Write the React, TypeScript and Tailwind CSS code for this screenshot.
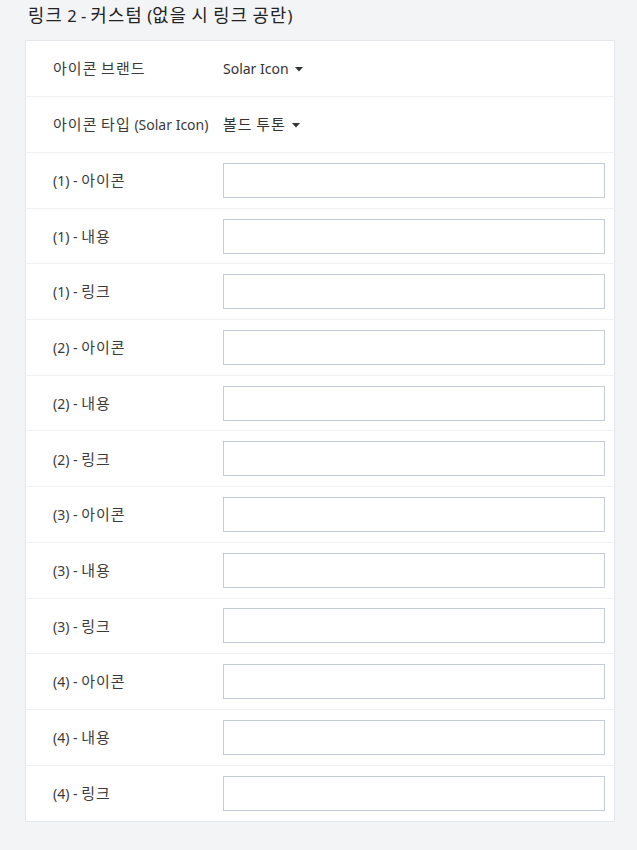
const FONT = { fontFamily: '"Noto Sans", "Noto Sans CJK KR", sans-serif' }

const ROWS = [1, 2, 3, 4].flatMap((n) => [
  `(${n}) - 아이콘`,
  `(${n}) - 내용`,
  `(${n}) - 링크`,
])

// Hangul in the reference sets wider than Noto's, so give those runs a bit more room
function Txt({ children }: { children: string }) {
  const parts = children.split(/([\uAC00-\uD7A3]+)/)
  return (
    <span>
      {parts.map((p, i) =>
        /[\uAC00-\uD7A3]/.test(p) ? (
          <span key={i} className="text-[1.07em] tracking-[0.07em]" style={{ fontFamily: '"Noto Sans CJK KR", sans-serif' }}>
            {p}
          </span>
        ) : (
          <span key={i}>{p}</span>
        ),
      )}
    </span>
  )
}

function Caret() {
  return (
    <svg width="8" height="5" viewBox="0 0 8 5" className="ml-[6px] mt-[1px]">
      <path d="M0 0h8L4 4.5z" fill="#333" />
    </svg>
  )
}

function SelectRow({ label, value }: { label: string; value: string }) {
  return (
    <div className="flex items-center h-[56px] border-b border-[#f0f1f3]">
      <div className="w-[197px] pl-[27px] shrink-0">
        <Txt>{label}</Txt>
      </div>
      <button className="flex items-center text-[#333]">
        <Txt>{value}</Txt>
        <Caret />
      </button>
    </div>
  )
}

export default function App() {
  return (
    <div className="min-h-[850px] bg-[#f3f4f6] text-[14px] text-[#3a3a3a]" style={FONT}>
      <div className="px-[28px] h-[40px] text-[16.5px] leading-[30px] text-[#222]">
        <Txt>링크 2 - 커스텀 (없을 시 링크 공란)</Txt>
      </div>
      <div className="ml-[25px] mr-[22px] bg-white border border-[#e3e6ea]">
        <SelectRow label="아이콘 브랜드" value="Solar Icon" />
        <SelectRow label="아이콘 타입 (Solar Icon)" value="볼드 투톤" />
        {ROWS.map((label, i) => (
          <div
            key={label}
            className={`flex items-center h-[55.7px] ${i < ROWS.length - 1 ? 'border-b border-[#f0f1f3]' : ''}`}
          >
            <div className="w-[197px] pl-[27px] shrink-0">
              <Txt>{label}</Txt>
            </div>
            <input
              type="text"
              className="flex-1 mr-[9px] h-[35px] border border-[#c5ccd6] bg-white outline-none px-2"
            />
          </div>
        ))}
      </div>
    </div>
  )
}
